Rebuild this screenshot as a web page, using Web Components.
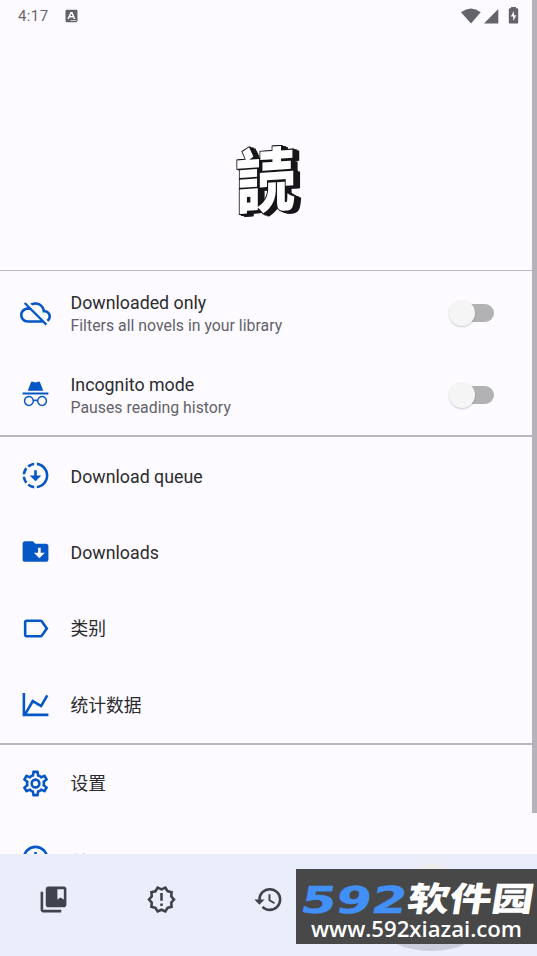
<!DOCTYPE html>
<html lang="zh"><head><meta charset="utf-8"><title>More</title>
<style>
html,body{margin:0;padding:0;background:#fdfbff;overflow:hidden}
body{font-family:Roboto,"Noto Sans CJK SC",sans-serif}
</style></head><body>
<more-screen></more-screen>
<script>
const P={
cloud:'<path d="M19.35 10.04C18.67 6.59 15.64 4 12 4c-1.48 0-2.85.43-4.01 1.17l1.46 1.46C10.21 6.23 11.08 6 12 6c3.04 0 5.5 2.46 5.5 5.5v.5H19c1.66 0 3 1.34 3 3 0 1.13-.64 2.11-1.56 2.62l1.45 1.45C23.16 18.16 24 16.68 24 15c0-2.64-2.05-4.78-4.65-4.96zM3 5.27l2.75 2.74C2.56 8.15 0 10.77 0 14c0 3.31 2.69 6 6 6h11.73l2 2L21 20.73 4.27 4 3 5.27zM7.73 10l8 8H6c-2.21 0-4-1.79-4-4s1.79-4 4-4h1.73z"/>',
incognito:'<path d="M17.06,13C15.2,13 13.64,14.33 13.24,16.1C12.29,15.69 11.42,15.8 10.76,16.09C10.35,14.31 8.79,13 6.94,13C4.77,13 3,14.79 3,17C3,19.21 4.77,21 6.94,21C9,21 10.68,19.38 10.84,17.32C11.18,17.08 12.07,16.63 13.16,17.34C13.34,19.39 15,21 17.06,21C19.23,21 21,19.21 21,17C21,14.79 19.23,13 17.06,13M6.94,19.86C5.38,19.86 4.13,18.58 4.13,17C4.13,15.42 5.39,14.14 6.94,14.14C8.5,14.14 9.75,15.42 9.75,17C9.75,18.58 8.5,19.86 6.94,19.86M17.06,19.86C15.5,19.86 14.25,18.58 14.25,17C14.25,15.42 15.5,14.14 17.06,14.14C18.62,14.14 19.88,15.42 19.88,17C19.88,18.58 18.61,19.86 17.06,19.86M22,10.5H2V12H22V10.5M15.53,2.63C15.31,2.14 14.75,1.88 14.22,2.05L12,2.79L9.77,2.05L9.72,2.04C9.19,1.89 8.63,2.17 8.43,2.68L6,9H18L15.56,2.68L15.53,2.63Z"/>',
queue:'<path d="M13,2.03C17.73,2.5 21.5,6.25 21.95,11C22.5,16.5 18.5,21.38 13,21.93V19.93C16.64,19.5 19.5,16.61 19.96,12.97C20.5,8.58 17.39,4.59 13,4.05V2.05L13,2.03M11,2.06V4.06C9.57,4.26 8.22,4.84 7.1,5.74L5.67,4.26C7.19,3 9.05,2.25 11,2.06M4.26,5.67L5.63,7.1C4.75,8.23 4.24,9.58 4.05,11H2.05C2.25,9.04 3,7.19 4.26,5.67M2.06,13H4.06C4.24,14.42 4.81,15.77 5.69,16.9L4.27,18.33C3.03,16.81 2.26,14.96 2.06,13M7.1,18.37C8.23,19.25 9.58,19.82 11,20V22C9.04,21.79 7.18,21 5.67,19.74L7.1,18.37M12,16.5L7.5,12H11V8H13V12H16.5L12,16.5Z"/>',
folder:'<path d="M20,6A2,2 0 0,1 22,8V18A2,2 0 0,1 20,20H4A2,2 0 0,1 2,18V6A2,2 0 0,1 4,4H10L12,6H20M19.25,13H16V9H14V13H10.75L15,17.25"/>',
label:'<path d="M17.63 5.84C17.27 5.33 16.67 5 16 5L5 5.01C3.9 5.01 3 5.9 3 7v10c0 1.1.9 1.99 2 1.99L16 19c.67 0 1.27-.33 1.63-.84L22 12l-4.37-6.16zM16 17H5V7h11l3.55 5L16 17z"/>',
chart:'<path d="M16,11.78L20.24,4.45L21.97,5.45L16.74,14.5L10.23,10.75L5.46,19H22V21H2V3H4V17.54L9.5,8L16,11.78Z"/>',
cog:'<path d="M12,8A4,4 0 0,1 16,12A4,4 0 0,1 12,16A4,4 0 0,1 8,12A4,4 0 0,1 12,8M12,10A2,2 0 0,0 10,12A2,2 0 0,0 12,14A2,2 0 0,0 14,12A2,2 0 0,0 12,10M10,22C9.75,22 9.54,21.82 9.5,21.58L9.13,18.93C8.5,18.68 7.96,18.34 7.44,17.94L4.95,18.95C4.73,19.03 4.46,18.95 4.34,18.73L2.34,15.27C2.21,15.05 2.27,14.78 2.46,14.63L4.57,12.97L4.5,12L4.57,11L2.46,9.37C2.27,9.22 2.21,8.95 2.34,8.73L4.34,5.27C4.46,5.05 4.73,4.96 4.95,5.05L7.44,6.05C7.96,5.66 8.5,5.32 9.13,5.07L9.5,2.42C9.54,2.18 9.75,2 10,2H14C14.25,2 14.46,2.18 14.5,2.42L14.87,5.07C15.5,5.32 16.04,5.66 16.56,6.05L19.05,5.05C19.27,4.96 19.54,5.05 19.66,5.27L21.66,8.73C21.79,8.95 21.73,9.22 21.54,9.37L19.43,11L19.5,12L19.43,13L21.54,14.63C21.73,14.78 21.79,15.05 21.66,15.27L19.66,18.73C19.54,18.95 19.27,19.04 19.05,18.95L16.56,17.95C16.04,18.34 15.5,18.68 14.87,18.93L14.5,21.58C14.46,21.82 14.25,22 14,22H10M11.25,4L10.88,6.61C9.68,6.86 8.62,7.5 7.85,8.39L5.44,7.35L4.69,8.65L6.8,10.2C6.4,11.37 6.4,12.64 6.8,13.8L4.68,15.36L5.43,16.66L7.86,15.62C8.63,16.5 9.68,17.14 10.87,17.38L11.24,20H12.76L13.13,17.39C14.32,17.14 15.37,16.5 16.14,15.62L18.57,16.66L19.32,15.36L17.2,13.81C17.6,12.64 17.6,11.37 17.2,10.2L19.31,8.65L18.56,7.35L16.15,8.39C15.38,7.5 14.32,6.86 13.12,6.62L12.75,4H11.25Z"/>',
info:'<path d="M11 9h2V7h-2m1 13a8 8 0 1 1 0-16 8 8 0 0 1 0 16m0-18a10 10 0 1 0 0 20 10 10 0 0 0 0-20m-1 15h2v-6h-2z"/>',
library:'<path d="M4 6H2v14c0 1.1.9 2 2 2h14v-2H4z"/><path fill-rule="evenodd" d="M20 2H8c-1.1 0-2 .9-2 2v12c0 1.1.9 2 2 2h12c1.1 0 2-.9 2-2V4c0-1.1-.9-2-2-2zm0 10-2.5-1.5L15 12V4h5z"/>',
updates:'<path d="M23 12l-2.44-2.78.34-3.68-3.61-.82-1.89-3.18L12 3 8.6 1.54 6.71 4.72l-3.61.81.34 3.68L1 12l2.44 2.78-.34 3.69 3.61.82 1.89 3.18L12 21l3.4 1.46 1.89-3.18 3.61-.82-.34-3.68zm-4.51 2.11.26 2.79-2.74.62-1.43 2.41L12 18.82l-2.58 1.11-1.43-2.41-2.74-.62.26-2.8L3.66 12l1.85-2.12-.26-2.78 2.74-.61 1.43-2.41L12 5.18l2.58-1.11 1.43 2.41 2.74.62-.26 2.79L20.34 12zM11 15h2v2h-2zm0-8h2v6h-2z"/>',
history:'<path d="M13.5,8H12V13L16.28,15.54L17,14.33L13.5,12.25V8M13,3A9,9 0 0,0 4,12H1L4.96,16.03L9,12H6A7,7 0 0,1 13,5A7,7 0 0,1 20,12A7,7 0 0,1 13,19C11.07,19 9.32,18.21 8.06,16.94L6.64,18.36C8.27,20 10.5,21 13,21A9,9 0 0,0 22,12A9,9 0 0,0 13,3"/>'
};
function define(name,html){customElements.define(name,class extends HTMLElement{
 constructor(){super();this.attachShadow({mode:'open'}).innerHTML=html}})}
customElements.define('m-icon',class extends HTMLElement{connectedCallback(){
 if(!this.shadowRoot)this.attachShadow({mode:'open'}).innerHTML=`<style>:host{display:block;width:31px;height:31px;flex:none}svg{display:block;width:100%;height:100%;fill:currentColor}</style><svg viewBox="0 0 24 24">${P[this.getAttribute('name')]}</svg>`}});
define('m-switch',`<style>:host{display:grid;width:45px;height:26px;align-items:center}i{grid-area:1/1;display:block}
.t{justify-self:end;width:36px;height:18px;border-radius:9px;background:#b2b1b3}
.k{width:26px;height:26px;border-radius:50%;background:#f5f5f5;box-shadow:0 1px 2px #0003}</style><i class="t"></i><i class="k"></i>`);
define('list-row',`<style>:host{display:flex;align-items:center;box-sizing:border-box;height:76.4px;padding:0 43.5px 0 20px;color:#2b2b2f}
slot[name=icon]::slotted(*){color:#0657c6;margin-right:19.5px}
.b{flex:1;display:flex;flex-direction:column;font-size:17.8px;line-height:24px;padding-top:var(--drop,2px)}
slot[name=sub]::slotted(*){font-size:15.85px;line-height:22px;color:#63626a}</style>
<slot name="icon"></slot><div class="b"><slot></slot><slot name="sub"></slot></div><slot name="end"></slot>`);
define('row-group',`<style>:host{display:block;border-top:var(--line,2px) solid #b9b7bb}</style><slot></slot>`);
define('status-bar',`<style>:host{display:flex;align-items:center;height:31px;padding:0 16px 0 18px;font-size:15px;letter-spacing:.4px;color:#67666a;box-sizing:border-box}
svg{display:block}.a{margin-left:16px}.r{margin-left:auto}</style>
<span>4:17</span><svg class="a" width="13" height="14" viewBox="0 0 13 14"><rect x=".5" y=".8" width="12" height="12.4" rx="1.4" fill="#636266"/><path d="M3 10 6 3.8h1L9.6 10M4.4 7.8h4" fill="none" stroke="#fdfbff" stroke-width="1.5"/><path d="M5.5 11.6h6" stroke="#fdfbff" stroke-width=".7"/></svg>
<svg class="r" width="61" height="20" viewBox="0 1 61 20" fill="#646367"><path d="M1 7.2Q11 0 20.7 7.2L11 18.6Z"/><path d="M38.3 4V18.5H24Z"/><path fill-rule="evenodd" d="M51 3.3V2h5v1.3h1.2q1 0 1 1v13.2q0 1-1 1h-7.4q-1 0-1-1V4.3q0-1 1-1zM54 6l-3.2 5.5h2.4V16l3.2-5.7H54z"/></svg>`);
define('app-logo',`<style>:host{display:grid;place-items:center;height:239px}
svg{display:block;overflow:visible;margin-top:64px}
text{font:900 68px "Noto Sans CJK JP",sans-serif}
.g{fill:#fff;stroke:#17151a;stroke-width:2px;paint-order:stroke;filter:drop-shadow(1px .5px 0 #17151a) drop-shadow(2px 1px 0 #17151a) drop-shadow(3px 1px 0 #17151a)}</style>
<svg width="66" height="72" viewBox="0 0 66 72"><g class="g"><text transform="matrix(.87 -.06 0 1.02 -.2 61.5)">読</text></g></svg>`);
define('site-badge',`<style>:host{display:block;background:#484848}svg{display:block}
.n{font:bold 37px "DejaVu Sans",sans-serif;fill:#4290f5;stroke:#4290f5;stroke-width:.4}
.c{font:900 31px "Noto Sans CJK SC",sans-serif;fill:#fff}
.u{font:600 22px "Open Sans","Noto Sans",sans-serif;fill:#fff}</style>
<svg width="241" height="75" viewBox="0 0 241 75"><text class="n" transform="translate(3 43.5) skewX(-10)" textLength="106" lengthAdjust="spacingAndGlyphs">592</text>
<text class="c" transform="translate(110 41.5) skewX(-9) scale(1 1.08)" textLength="126" lengthAdjust="spacingAndGlyphs">软件园</text>
<text class="u" x="15" y="67.5" textLength="211" lengthAdjust="spacingAndGlyphs">www.592xiazai.com</text></svg>`);
define('nav-bar',`<style>:host{display:grid;grid-template-columns:repeat(5,107.6px);height:102px;background:#e9eefa;color:#40434d;position:relative}
m-icon{justify-self:center;margin-top:30px}
.blob{position:absolute;right:50px;bottom:5px}
site-badge{position:absolute;right:0;top:15px}</style>
<m-icon name="library"></m-icon><m-icon name="updates"></m-icon><m-icon name="history"></m-icon>
<svg class="blob" width="112" height="88" viewBox="0 0 112 88"><ellipse cx="56" cy="14" rx="19" ry="14" fill="#eeedf0"/><ellipse cx="56" cy="62" rx="50" ry="26" fill="#cacddb"/></svg>
<site-badge></site-badge>`);
define('more-screen',`<style>:host{display:flex;flex-direction:column;width:537px;height:956px;overflow:hidden;background:#fdfbff;position:relative}
main{flex:1;min-height:0;overflow:hidden}
.g1{--line:1px}.g1 list-row{height:82.2px;padding-top:1px}
.g3 list-row:last-child{height:74.5px;--drop:9px}
.bar{position:absolute;right:0;top:0;width:5px;height:813px;background:#b5b3b7}
</style>
<main><status-bar></status-bar><app-logo></app-logo>
<row-group class="g1">
<list-row><m-icon slot="icon" name="cloud"></m-icon>Downloaded only<span slot="sub">Filters all novels in your library</span><m-switch slot="end"></m-switch></list-row>
<list-row><m-icon slot="icon" name="incognito"></m-icon>Incognito mode<span slot="sub">Pauses reading history</span><m-switch slot="end"></m-switch></list-row></row-group>
<row-group>
<list-row><m-icon slot="icon" name="queue"></m-icon>Download queue</list-row>
<list-row><m-icon slot="icon" name="folder"></m-icon>Downloads</list-row>
<list-row><m-icon slot="icon" name="label"></m-icon>类别</list-row>
<list-row><m-icon slot="icon" name="chart"></m-icon>统计数据</list-row></row-group>
<row-group class="g3">
<list-row><m-icon slot="icon" name="cog"></m-icon>设置</list-row>
<list-row><m-icon slot="icon" name="info"></m-icon>关于</list-row></row-group>
</main><nav-bar></nav-bar><div class="bar"></div>`);
</script></body></html>
